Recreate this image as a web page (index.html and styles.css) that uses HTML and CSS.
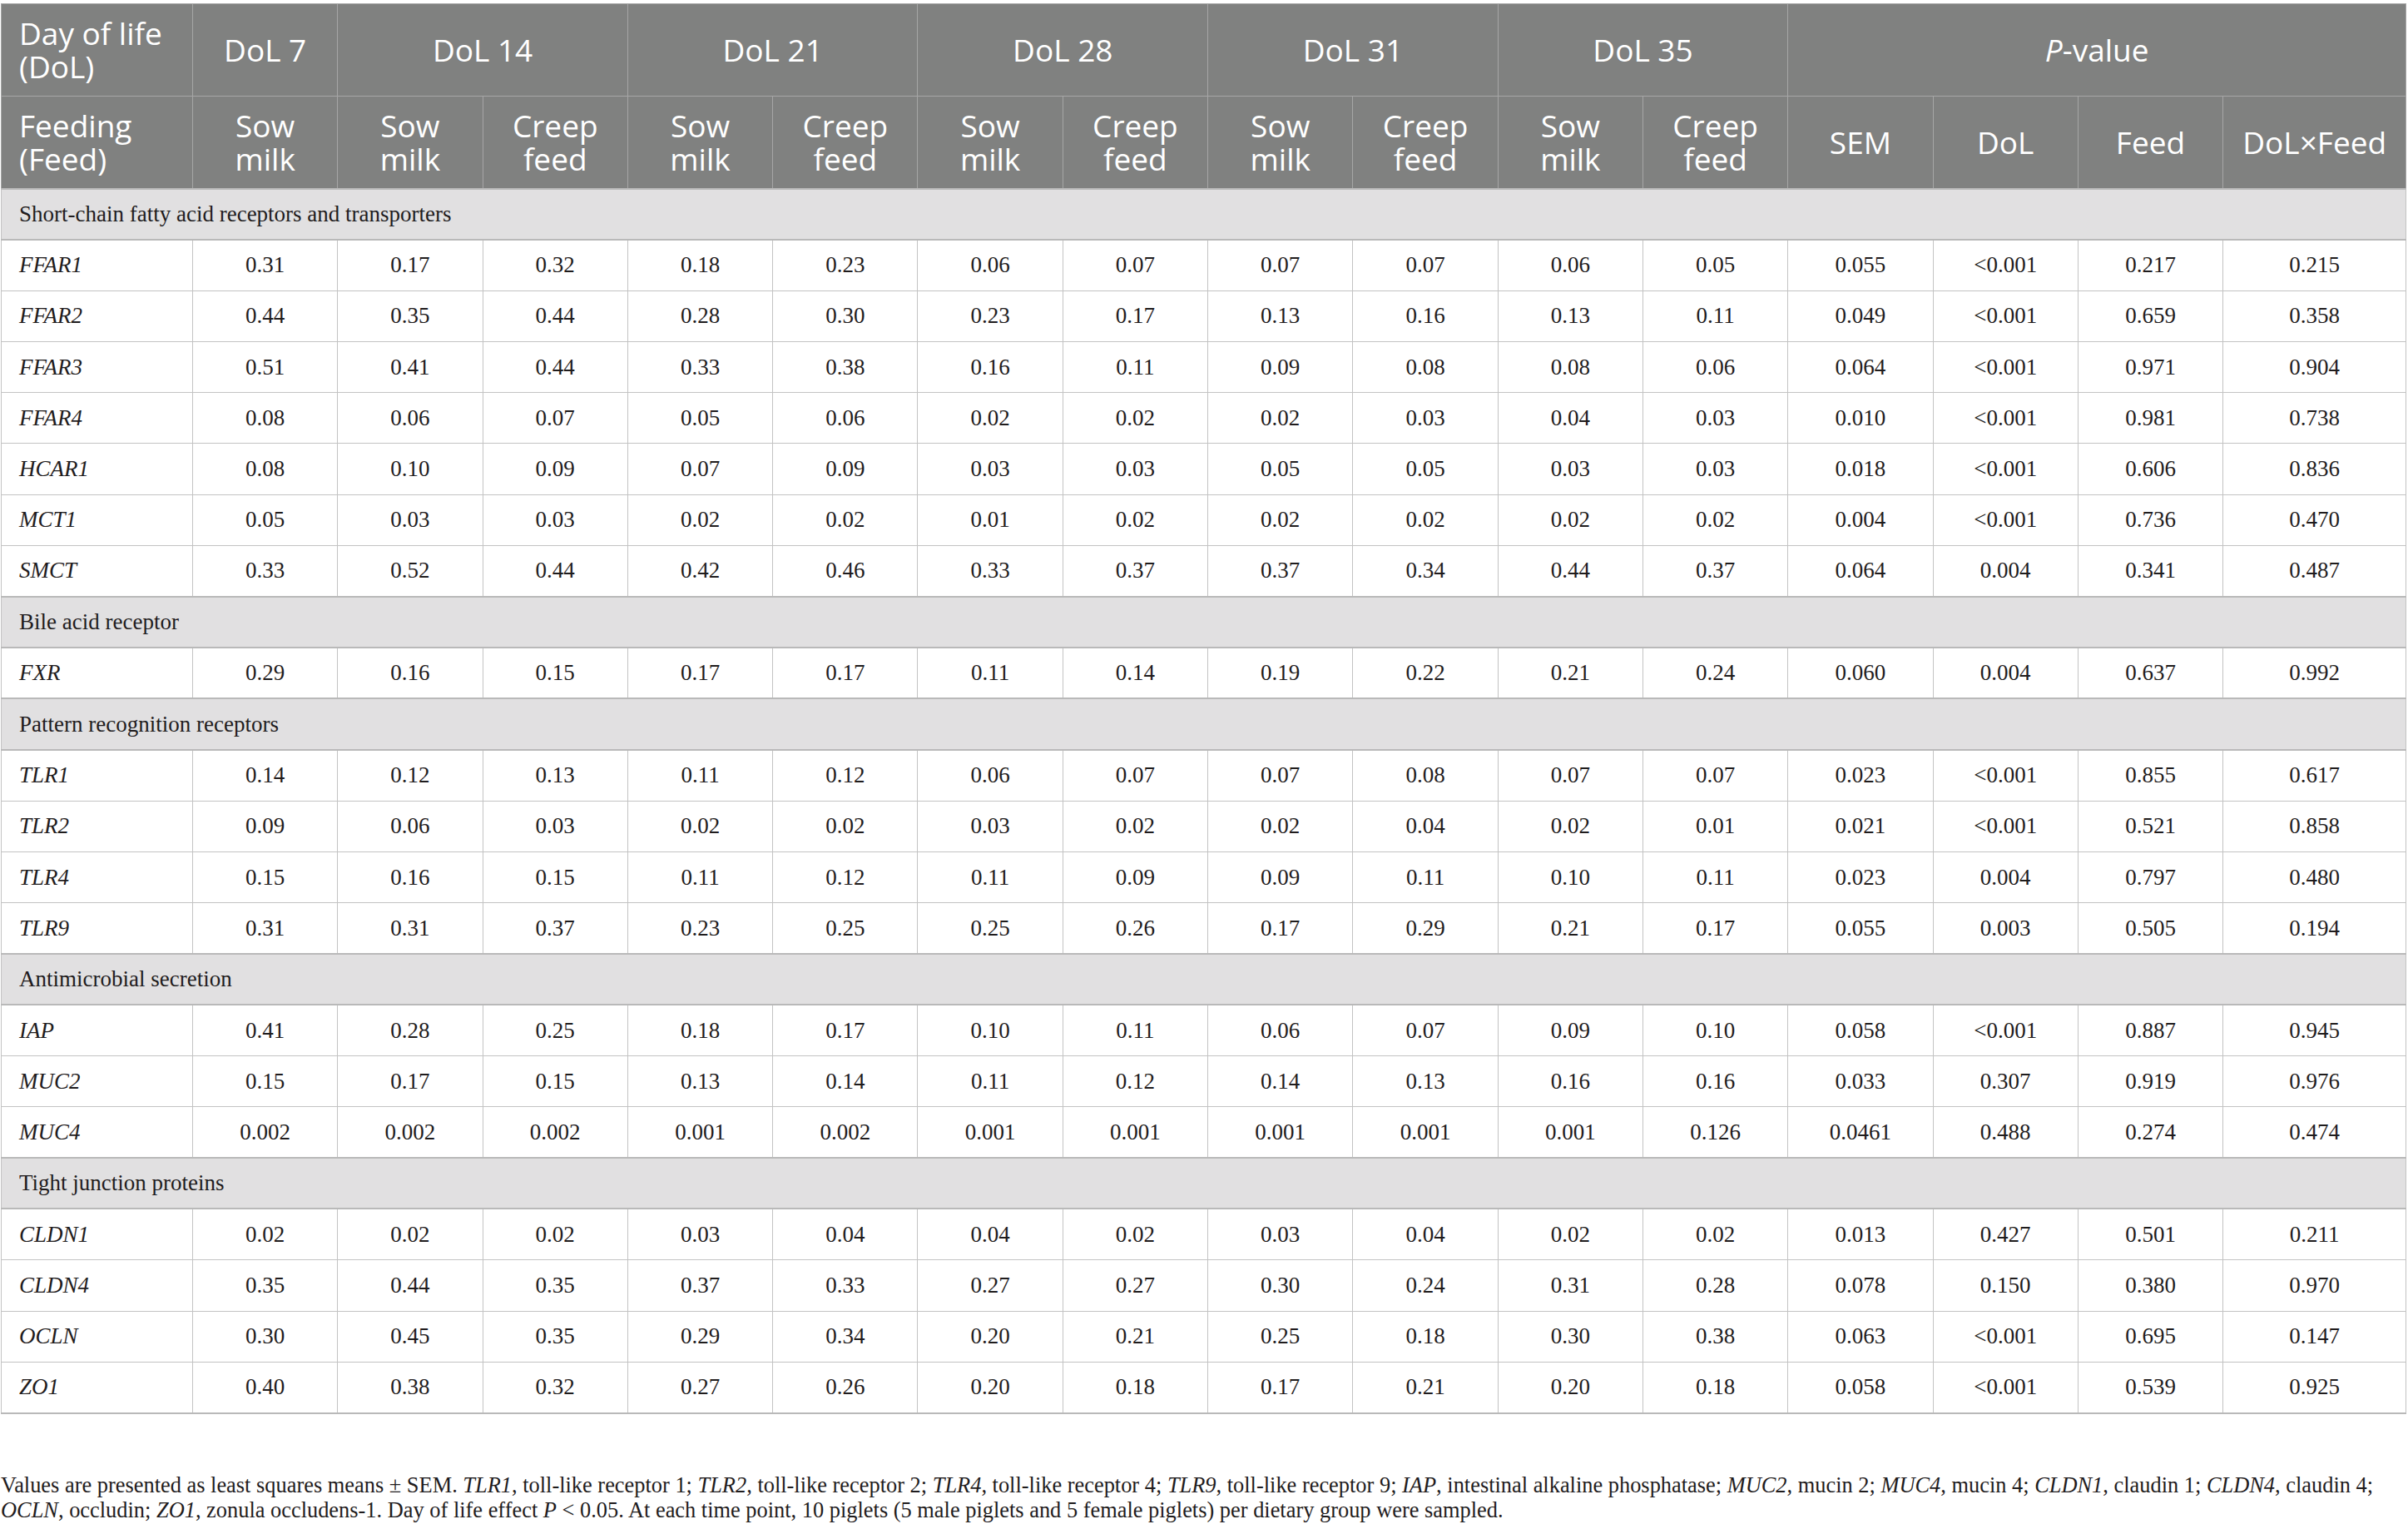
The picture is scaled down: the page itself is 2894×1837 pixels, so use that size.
FILE: index.html
```html
<!DOCTYPE html>
<html lang="en">
<head>
<meta charset="utf-8">
<title>Table</title>
<link rel="stylesheet" href="styles.css">
</head>
<body>
<div class="page">
<table class="data">
<colgroup>
<col class="c-first">
<col class="c-val"><col class="c-val"><col class="c-val"><col class="c-val"><col class="c-val"><col class="c-val"><col class="c-val"><col class="c-val"><col class="c-val"><col class="c-val"><col class="c-val"><col class="c-val"><col class="c-val"><col class="c-val">
<col class="c-last">
</colgroup>
<thead>
<tr class="h1">
<th class="left">Day of life<br>(DoL)</th>
<th>DoL 7</th>
<th colspan="2">DoL 14</th>
<th colspan="2">DoL 21</th>
<th colspan="2">DoL 28</th>
<th colspan="2">DoL 31</th>
<th colspan="2">DoL 35</th>
<th colspan="4"><i>P</i>-value</th>
</tr>
<tr class="h2">
<th class="left">Feeding<br>(Feed)</th>
<th>Sow<br>milk</th>
<th>Sow<br>milk</th><th>Creep<br>feed</th>
<th>Sow<br>milk</th><th>Creep<br>feed</th>
<th>Sow<br>milk</th><th>Creep<br>feed</th>
<th>Sow<br>milk</th><th>Creep<br>feed</th>
<th>Sow<br>milk</th><th>Creep<br>feed</th>
<th>SEM</th><th>DoL</th><th>Feed</th><th>DoL×Feed</th>
</tr>
</thead>
<tbody>
<tr class="sec"><td colspan="16">Short-chain fatty acid receptors and transporters</td></tr>
<tr><td class="gene">FFAR1</td><td>0.31</td><td>0.17</td><td>0.32</td><td>0.18</td><td>0.23</td><td>0.06</td><td>0.07</td><td>0.07</td><td>0.07</td><td>0.06</td><td>0.05</td><td>0.055</td><td>&lt;0.001</td><td>0.217</td><td>0.215</td></tr>
<tr><td class="gene">FFAR2</td><td>0.44</td><td>0.35</td><td>0.44</td><td>0.28</td><td>0.30</td><td>0.23</td><td>0.17</td><td>0.13</td><td>0.16</td><td>0.13</td><td>0.11</td><td>0.049</td><td>&lt;0.001</td><td>0.659</td><td>0.358</td></tr>
<tr><td class="gene">FFAR3</td><td>0.51</td><td>0.41</td><td>0.44</td><td>0.33</td><td>0.38</td><td>0.16</td><td>0.11</td><td>0.09</td><td>0.08</td><td>0.08</td><td>0.06</td><td>0.064</td><td>&lt;0.001</td><td>0.971</td><td>0.904</td></tr>
<tr><td class="gene">FFAR4</td><td>0.08</td><td>0.06</td><td>0.07</td><td>0.05</td><td>0.06</td><td>0.02</td><td>0.02</td><td>0.02</td><td>0.03</td><td>0.04</td><td>0.03</td><td>0.010</td><td>&lt;0.001</td><td>0.981</td><td>0.738</td></tr>
<tr><td class="gene">HCAR1</td><td>0.08</td><td>0.10</td><td>0.09</td><td>0.07</td><td>0.09</td><td>0.03</td><td>0.03</td><td>0.05</td><td>0.05</td><td>0.03</td><td>0.03</td><td>0.018</td><td>&lt;0.001</td><td>0.606</td><td>0.836</td></tr>
<tr><td class="gene">MCT1</td><td>0.05</td><td>0.03</td><td>0.03</td><td>0.02</td><td>0.02</td><td>0.01</td><td>0.02</td><td>0.02</td><td>0.02</td><td>0.02</td><td>0.02</td><td>0.004</td><td>&lt;0.001</td><td>0.736</td><td>0.470</td></tr>
<tr><td class="gene">SMCT</td><td>0.33</td><td>0.52</td><td>0.44</td><td>0.42</td><td>0.46</td><td>0.33</td><td>0.37</td><td>0.37</td><td>0.34</td><td>0.44</td><td>0.37</td><td>0.064</td><td>0.004</td><td>0.341</td><td>0.487</td></tr>
<tr class="sec"><td colspan="16">Bile acid receptor</td></tr>
<tr><td class="gene">FXR</td><td>0.29</td><td>0.16</td><td>0.15</td><td>0.17</td><td>0.17</td><td>0.11</td><td>0.14</td><td>0.19</td><td>0.22</td><td>0.21</td><td>0.24</td><td>0.060</td><td>0.004</td><td>0.637</td><td>0.992</td></tr>
<tr class="sec"><td colspan="16">Pattern recognition receptors</td></tr>
<tr><td class="gene">TLR1</td><td>0.14</td><td>0.12</td><td>0.13</td><td>0.11</td><td>0.12</td><td>0.06</td><td>0.07</td><td>0.07</td><td>0.08</td><td>0.07</td><td>0.07</td><td>0.023</td><td>&lt;0.001</td><td>0.855</td><td>0.617</td></tr>
<tr><td class="gene">TLR2</td><td>0.09</td><td>0.06</td><td>0.03</td><td>0.02</td><td>0.02</td><td>0.03</td><td>0.02</td><td>0.02</td><td>0.04</td><td>0.02</td><td>0.01</td><td>0.021</td><td>&lt;0.001</td><td>0.521</td><td>0.858</td></tr>
<tr><td class="gene">TLR4</td><td>0.15</td><td>0.16</td><td>0.15</td><td>0.11</td><td>0.12</td><td>0.11</td><td>0.09</td><td>0.09</td><td>0.11</td><td>0.10</td><td>0.11</td><td>0.023</td><td>0.004</td><td>0.797</td><td>0.480</td></tr>
<tr><td class="gene">TLR9</td><td>0.31</td><td>0.31</td><td>0.37</td><td>0.23</td><td>0.25</td><td>0.25</td><td>0.26</td><td>0.17</td><td>0.29</td><td>0.21</td><td>0.17</td><td>0.055</td><td>0.003</td><td>0.505</td><td>0.194</td></tr>
<tr class="sec"><td colspan="16">Antimicrobial secretion</td></tr>
<tr><td class="gene">IAP</td><td>0.41</td><td>0.28</td><td>0.25</td><td>0.18</td><td>0.17</td><td>0.10</td><td>0.11</td><td>0.06</td><td>0.07</td><td>0.09</td><td>0.10</td><td>0.058</td><td>&lt;0.001</td><td>0.887</td><td>0.945</td></tr>
<tr><td class="gene">MUC2</td><td>0.15</td><td>0.17</td><td>0.15</td><td>0.13</td><td>0.14</td><td>0.11</td><td>0.12</td><td>0.14</td><td>0.13</td><td>0.16</td><td>0.16</td><td>0.033</td><td>0.307</td><td>0.919</td><td>0.976</td></tr>
<tr><td class="gene">MUC4</td><td>0.002</td><td>0.002</td><td>0.002</td><td>0.001</td><td>0.002</td><td>0.001</td><td>0.001</td><td>0.001</td><td>0.001</td><td>0.001</td><td>0.126</td><td>0.0461</td><td>0.488</td><td>0.274</td><td>0.474</td></tr>
<tr class="sec"><td colspan="16">Tight junction proteins</td></tr>
<tr><td class="gene">CLDN1</td><td>0.02</td><td>0.02</td><td>0.02</td><td>0.03</td><td>0.04</td><td>0.04</td><td>0.02</td><td>0.03</td><td>0.04</td><td>0.02</td><td>0.02</td><td>0.013</td><td>0.427</td><td>0.501</td><td>0.211</td></tr>
<tr><td class="gene">CLDN4</td><td>0.35</td><td>0.44</td><td>0.35</td><td>0.37</td><td>0.33</td><td>0.27</td><td>0.27</td><td>0.30</td><td>0.24</td><td>0.31</td><td>0.28</td><td>0.078</td><td>0.150</td><td>0.380</td><td>0.970</td></tr>
<tr><td class="gene">OCLN</td><td>0.30</td><td>0.45</td><td>0.35</td><td>0.29</td><td>0.34</td><td>0.20</td><td>0.21</td><td>0.25</td><td>0.18</td><td>0.30</td><td>0.38</td><td>0.063</td><td>&lt;0.001</td><td>0.695</td><td>0.147</td></tr>
<tr><td class="gene">ZO1</td><td>0.40</td><td>0.38</td><td>0.32</td><td>0.27</td><td>0.26</td><td>0.20</td><td>0.18</td><td>0.17</td><td>0.21</td><td>0.20</td><td>0.18</td><td>0.058</td><td>&lt;0.001</td><td>0.539</td><td>0.925</td></tr>
</tbody>
</table>
<p class="note">Values are presented as least squares means ± SEM. <i>TLR1</i>, toll-like receptor 1; <i>TLR2</i>, toll-like receptor 2; <i>TLR4</i>, toll-like receptor 4; <i>TLR9</i>, toll-like receptor 9; <i>IAP</i>, intestinal alkaline phosphatase; <i>MUC2</i>, mucin 2; <i>MUC4</i>, mucin 4; <i>CLDN1</i>, claudin 1; <i>CLDN4</i>, claudin 4; <i>OCLN</i>, occludin; <i>ZO1</i>, zonula occludens-1. Day of life effect <i>P</i> &lt; 0.05. At each time point, 10 piglets (5 male piglets and 5 female piglets) per dietary group were sampled.</p>
</div>
</body>
</html>
```

FILE: styles.css
```css
html, body {
  margin: 0;
  padding: 0;
  background: #ffffff;
}

.page {
  padding: 4px 2px 0 1px;
  font-family: "Liberation Serif", "Times New Roman", serif;
  color: #1f1c1d;
}

.data {
  width: 2890px;
  border-collapse: collapse;
  table-layout: fixed;
}

.c-first { width: 230px; }
.c-val { width: 174.3px; }
.c-last { width: 220px; }

.data th {
  background: #808180;
  color: #ffffff;
  font-family: "Open Sans", "Liberation Sans", sans-serif;
  font-weight: 400;
  font-size: 37px;
  line-height: 40px;
  text-align: center;
  vertical-align: middle;
  padding: 0 8px;
  border: 1px solid #a6a6a6;
  height: 111px;
  box-sizing: border-box;
}

.data th.left {
  text-align: left;
  padding-left: 21px;
}

.data td {
  font-size: 27px;
  text-align: center;
  vertical-align: middle;
  border: 1px solid #c3c3c3;
  height: 61.3px;
  padding: 0;
  box-sizing: border-box;
}

.data td.gene {
  text-align: left;
  font-style: italic;
  padding-left: 21px;
}

.data tr.sec td {
  background: #e1e0e1;
  text-align: left;
  padding-left: 21px;
  border-top: 2px solid #b9b9b9;
  border-bottom: 2px solid #b9b9b9;
}

.data tbody tr:last-child td {
  border-bottom: 2px solid #b9b9b9;
}

.note {
  margin: 70px 0 0 0;
  font-size: 26.4px;
  line-height: 30px;
  width: 2880px;
}
```
